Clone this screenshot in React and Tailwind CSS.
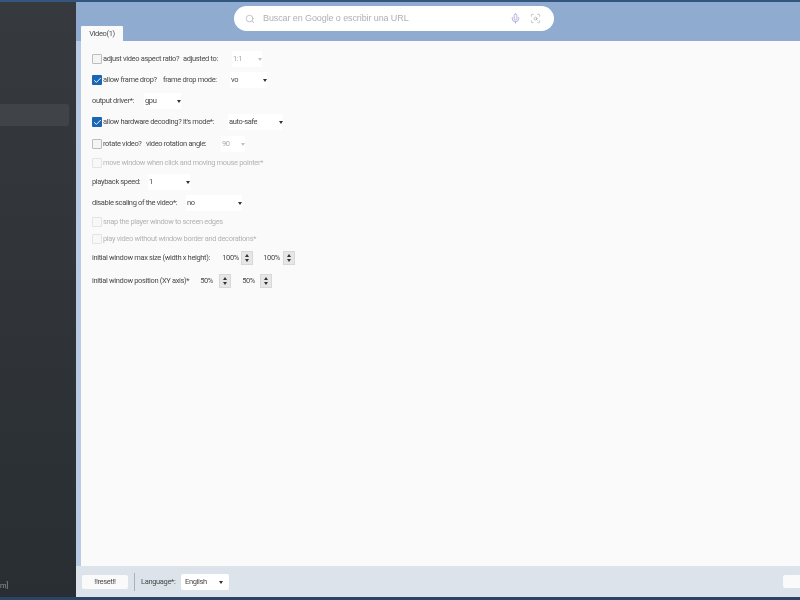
import React from 'react';
import { Search, Mic, ScanSearch, Check } from 'lucide-react';

function Box({ checked, disabled }) {
  if (checked) {
    return (
      <span className="w-[10px] h-[10px] mr-[1px] bg-[#1a66b5] rounded-[1px] flex items-center justify-center shrink-0">
        <Check size={9} strokeWidth={2.5} className="text-white" />
      </span>
    );
  }
  return (
    <span
      className={`w-[10px] h-[10px] mr-[1px] border rounded-[1px] shrink-0 ${
        disabled ? 'border-[#e4e4e4] bg-[#f8f8f8]' : 'border-[#bdbdbd] bg-[#f4f4f4]'
      }`}
    />
  );
}

function Select({ value, textLeft, width, disabled }) {
  return (
    <div
      className={`h-[16px] flex items-center bg-white relative pl-[1px] ${disabled ? 'text-[#a9a9a9]' : 'text-[#4a4a4a]'}`}
      style={{ marginLeft: textLeft, width }}
    >
      <span>{value}</span>
      <span
        className={`absolute right-0 top-[7px] w-0 h-0 border-l-[2px] border-r-[2px] border-t-[3px] border-l-transparent border-r-transparent ${
          disabled ? 'border-t-[#c0c0c0]' : 'border-t-[#333333]'
        }`}
      />
    </div>
  );
}

function Spin({ value, width, left, gap }) {
  return (
    <div className="flex items-center" style={{ marginLeft: left }}>
      <span className="text-right" style={{ width, marginRight: gap }}>{value}</span>
      <div className="w-[12px] h-[14px] bg-[#e6e6e6] border border-[#d8d8d8] flex flex-col items-center justify-center gap-[2px]">
        <span className="w-0 h-0 border-l-[2.5px] border-r-[2.5px] border-b-[3px] border-l-transparent border-r-transparent border-b-[#333333]" />
        <span className="w-0 h-0 border-l-[2.5px] border-r-[2.5px] border-t-[3px] border-l-transparent border-r-transparent border-t-[#333333]" />
      </div>
    </div>
  );
}

export default function App() {
  return (
    <div
      className="w-[800px] h-[600px] flex overflow-hidden border-t-[2px] border-t-[#33567f] border-b-[3px] border-b-[#2b4565] bg-[#94aed0] text-[7.5px] tracking-[-0.35px] whitespace-nowrap text-[#4a4a4a] blur-[0.4px]"
      style={{ fontFamily: 'Roboto, "Liberation Sans", Arial, sans-serif' }}
    >
      {/* barra lateral */}
      <aside className="w-[76px] shrink-0 bg-gradient-to-b from-[#363a3e] to-[#292e32] flex flex-col">
        <div className="h-[102px]" />
        <div className="w-[69px] h-[22px] bg-[#404347] rounded-r-[2px]" />
        <div className="flex-1" />
        <div className="pb-[7px] text-[#8f9498] leading-[8px]">m]</div>
      </aside>

      <div className="flex-1 flex flex-col bg-gradient-to-b from-[#8fabd0] to-[#9ab2cd]">
        <header className="h-[39px] shrink-0 flex pl-[5px]">
          <div className="self-end w-[42px] h-[15px] bg-[#fafafa] flex items-center justify-center rounded-t-[1px]">
            Video(1)
          </div>
          <div className="ml-[111px] mt-[4px] w-[320px] h-[25px] bg-white rounded-full flex items-center pl-[11px] pr-[11px] text-[#b0b0b4] text-[9px] tracking-[-0.1px]" style={{ fontFamily: '"Liberation Sans", Arial, sans-serif' }}>
            <Search size={10} strokeWidth={1.5} className="text-[#a4a4a4]" />
            <span className="ml-[8px] flex-1">Buscar en Google o escribir una URL</span>
            <Mic size={11} strokeWidth={2} className="text-[#a9a8dc]" />
            <ScanSearch size={11} strokeWidth={1.5} className="ml-[9px] mr-[2px] text-[#a4a4a4]" />
          </div>
        </header>

        <div className="flex-1 pl-[5px] bg-[#b8cbe2] flex flex-col">
          <main className="flex-1 bg-[#fafafa] pl-[11px] pt-[10px]">
            <div className="h-[16px] flex items-center">
              <Box />
              <span className="w-[80px]">adjust video aspect ratio?</span>
              <span className="w-[36px]">adjusted to:</span>
              <Select value="1:1" textLeft={13} width={30} disabled />
            </div>
            <div className="h-[16px] mt-[5px] flex items-center">
              <Box checked />
              <span className="w-[60px]">allow frame drop?</span>
              <span className="w-[54px]">frame drop mode:</span>
              <Select value="vo" textLeft={13} width={37} />
            </div>
            <div className="h-[16px] mt-[5px] flex items-center">
              <span className="w-[45px]">output driver*:</span>
              <Select value="gpu" textLeft={7} width={37} />
            </div>
            <div className="h-[16px] mt-[5px] flex items-center">
              <Box checked />
              <span className="w-[112px]">allow hardware decoding? it's mode*:</span>
              <Select value="auto-safe" textLeft={13} width={55} />
            </div>
            <div className="h-[16px] mt-[6px] flex items-center">
              <Box />
              <span className="w-[43px]">rotate video?</span>
              <span className="w-[62px]">video rotation angle:</span>
              <Select value="90" textLeft={13} width={24} disabled />
            </div>
            <div className="h-[16px] mt-[3px] flex items-center text-[#b4b4b4]">
              <Box disabled />
              <span>move window when click and moving mouse pointer*</span>
            </div>
            <div className="h-[16px] mt-[3px] flex items-center">
              <span className="w-[48px]">playback speed:</span>
              <Select value="1" textLeft={8} width={42} />
            </div>
            <div className="h-[16px] mt-[5px] flex items-center">
              <span className="w-[86px]">disable scaling of the video*:</span>
              <Select value="no" textLeft={8} width={56} />
            </div>
            <div className="h-[16px] mt-[3px] flex items-center text-[#b4b4b4]">
              <Box disabled />
              <span>snap the player window to screen edges</span>
            </div>
            <div className="h-[16px] mt-[1px] flex items-center text-[#b4b4b4]">
              <Box disabled />
              <span>play video without window border and decorations*</span>
            </div>
            <div className="h-[16px] mt-[3px] flex items-center">
              <span className="w-[120px]">initial window max size (width x height):</span>
              <Spin value="100%" width={18} left={9} gap={2} />
              <Spin value="100%" width={18} left={9} gap={3} />
            </div>
            <div className="h-[16px] mt-[7px] flex items-center">
              <span className="w-[98px]">initial window position (XY axis)*</span>
              <Spin value="50%" width={15} left={8} gap={6} />
              <Spin value="50%" width={15} left={9} gap={5} />
            </div>
          </main>

          <footer className="h-[31px] shrink-0 -ml-[5px] pl-[6px] bg-[#dce3ea] flex items-center">
            <button className="w-[46px] h-[14px] bg-[#fafafa] rounded-[2px]">!!reset!!</button>
            <div className="ml-[6px] w-px h-[18px] bg-[#a9b1b8]" />
            <span className="ml-[6px] w-[35px]">Language*:</span>
            <div className="ml-[5px] w-[48px] h-[16px] bg-white rounded-[2px] flex items-center pl-[4px] relative">
              English
              <span className="absolute right-[6px] top-[7px] w-0 h-0 border-l-[2px] border-r-[2px] border-t-[3px] border-l-transparent border-r-transparent border-t-[#333333]" />
            </div>
            <div className="flex-1" />
            <div className="w-[17px] h-[13px] bg-[#fafafa] rounded-l-[2px]" />
          </footer>
        </div>
      </div>
    </div>
  );
}
